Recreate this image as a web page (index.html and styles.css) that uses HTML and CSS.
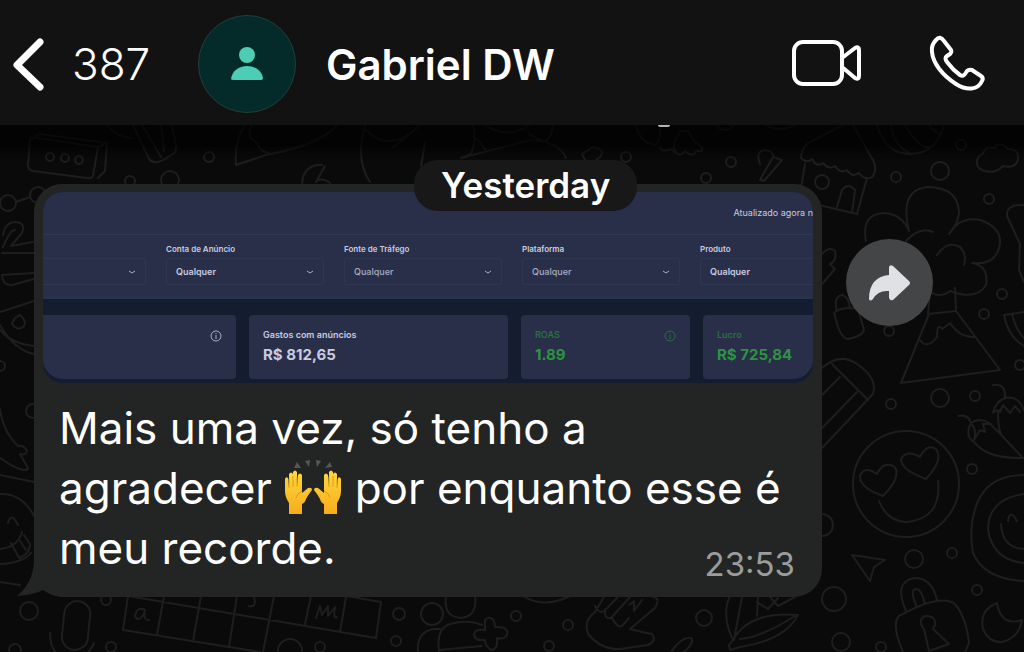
FILE: index.html
```
<!DOCTYPE html>
<html lang="pt-BR">
<head>
  <meta charset="UTF-8">
  <meta name="viewport" content="width=device-width, initial-scale=1.0">
  <title>Gabriel DW</title>
  <link rel="stylesheet" href="styles.css">
</head>
<body>
  <!-- Wallpaper -->
  <svg class="wallpaper" viewBox="0 0 1024 652" preserveAspectRatio="xMinYMin slice" aria-hidden="true">
    <!-- small dots -->
    <circle cx="209" cy="157" r="5"/><circle cx="170" cy="180" r="9"/><circle cx="130" cy="181" r="5"/>
    <circle cx="731" cy="162" r="5"/><circle cx="706" cy="178" r="5"/><circle cx="626" cy="157" r="5"/>
    <circle cx="961" cy="145" r="5"/><circle cx="896" cy="177" r="5"/><circle cx="940" cy="171" r="9"/>
    <circle cx="989" cy="199" r="5"/><circle cx="1002" cy="294" r="5"/><circle cx="984" cy="314" r="5"/>
    <circle cx="889" cy="331" r="5"/><circle cx="1020" cy="365" r="5"/><circle cx="940" cy="398" r="9"/>
    <circle cx="975" cy="396" r="5"/><circle cx="891" cy="404" r="5"/><circle cx="972" cy="469" r="5"/>
    <circle cx="822" cy="525" r="11"/><circle cx="914" cy="559" r="9"/><circle cx="952" cy="553" r="5"/>
    <circle cx="977" cy="590" r="5"/><circle cx="834" cy="599" r="12"/><circle cx="841" cy="642" r="9"/>
    <circle cx="881" cy="647" r="5"/><circle cx="29" cy="611" r="9"/><circle cx="106" cy="600" r="5"/>
    <circle cx="15" cy="650" r="6"/><circle cx="111" cy="647" r="5"/><circle cx="290" cy="651" r="12"/>
    <circle cx="320" cy="647" r="5"/><circle cx="399" cy="614" r="6"/><circle cx="396" cy="641" r="5"/>
    <circle cx="516" cy="616" r="5"/><circle cx="568" cy="625" r="5"/><circle cx="549" cy="646" r="5"/>
    <circle cx="704" cy="618" r="8"/><circle cx="0" cy="366" r="5"/><circle cx="33" cy="411" r="7"/>
    <!-- speech box -->
    <path d="M30 139 Q31 137 37 138 L98 147 L93 176 Q92 179 87 178 L33 171 Q28 170 28 165ZM35 136 L40 134 L107 143 L105 171 L98 178M98 147 L107 143"/>
    <circle cx="50" cy="157" r="4"/><circle cx="65" cy="158" r="4"/><circle cx="79" cy="160" r="4"/>
    <!-- dumbbell and ribbon -->
    <circle cx="8" cy="203" r="8"/><circle cx="38" cy="195" r="8"/>
    <path d="M16 202 L30 197M3 235 Q5 222 16 222 Q26 223 22 233 L11 246 L33 242M3 247 Q10 230 15 230M2 253 L34 253M2 275 L34 273M2 275 Q3 286 12 285 L34 279"/>
    <path d="M0 312 L34 301M0 325 Q14 350 34 354M12 324 Q14 317 20 315 Q27 321 24 326 Q18 332 12 324M0 330 Q12 344 34 346"/>
    <!-- pencil and pants -->
    <path d="M107 125 Q116 137 131 138M133 125 L149 159 Q154 165 163 160 L173 154 Q177 151 176 145 L172 125M161 125 L164 151M142 125 L161 157M245 125 Q234 142 236 165 L266 155 Q320 145 337 125M252 125 Q245 138 258 143 Q257 150 271 154M322 165 Q304 164 302 183 M325 166 L316 182 M318 180 Q324 178 330 183"/>
    <!-- fruit, guitar and cupcake -->
    <path d="M365 125 Q355 160 370 182M366 130 Q390 155 420 125M393 147 L406 138M425 143 Q423 155 421 166M473 125 Q477 140 471 154L461 158 L530 140 Q560 142 566 158M476 138 L485 149M485 125 Q508 140 529 125M529 134 L544 142 Q552 138 553 125M582 154 L588 166 L600 157 Q606 149 593 147ZM636 125 Q640 143 655 145 Q661 140 660 129M660 147 Q662 153 672 149 Q679 159 685 151 Q693 158 696 151 L702 151 Q704 147 695 142 L688 131 L681 131 Q670 145 676 151"/>
    <path d="M716 125 Q725 135 734 125M766 125 Q780 133 795 125M760 164 Q755 151 765 150 Q774 151 773 157 L782 160 L764 181 L760 180 L773 157"/>
    <!-- house -->
    <path d="M843 125 L808 143 Q801 150 801 158 Q807 164 812 159 Q817 168 823 163 Q829 170 835 166 Q840 174 847 170 Q852 178 859 173 Q865 181 872 177 Q877 172 874 162 L853 125M805 164 L801 188M867 178 L857 214 L819 205M837 207 L842 190 Q848 182 855 190 L852 213"/>
    <circle cx="822" cy="182" r="7"/>
    <!-- balloon -->
    <path d="M877 125 Q885 154 911 154 Q937 153 944 125M891 125 Q893 145 911 154M905 125 Q920 150 930 147M929 125 Q938 136 942 133"/>
    <!-- cloud -->
    <path d="M983 154 Q985 146 994 148 Q1000 140 1008 149 Q1019 148 1018 160 Q1015 169 1003 166 Q995 174 985 171 Q976 169 977 161 Q978 155 983 154"/>
    <!-- tree on a mountain -->
    <path d="M866 241 Q861 214 884 213 Q902 214 909 231 Q899 190 927 187 Q959 187 959 214 Q957 225 949 234 Q960 216 980 220 Q1001 227 1000 243 Q997 266 972 263 Q989 266 986 285 Q976 301 950 291 Q941 298 932 293M906 241 Q920 226 933 232M937 255 Q947 240 960 247 Q967 254 964 265M930 291 L928 314 L956 311 L955 288M929 314 L901 383 L1000 370 L956 311M920 340 Q927 350 937 337 Q937 322 942 329 L950 323 Q960 338 975 337"/>
    <path d="M1024 205 Q1006 204 1007 216 L1020 244 L1019 270 L1024 282M1024 312 L1004 315 Q1008 337 1024 346M1012 314 Q1016 330 1024 338"/>
    <!-- padlock and mitten behind the forward button -->
    <path d="M834 313 Q838 308 851 308 L858 309 L864 330 Q863 336 848 339 Q842 338 838 327ZM837 311 Q833 297 842 295 Q849 297 850 308M822 254 Q829 246 835 251 Q837 261 830 264 L835 269 L822 284"/>
    <!-- rolled paper -->
    <path d="M822 368 Q840 352 857 364 Q878 378 873 394 L822 448M832 364 L868 400M857 392 L822 428M822 395 L840 377"/>
    <!-- heart-eyed face -->
    <circle cx="906" cy="484" r="53"/>
    <path d="M883 496 Q859 487 860 476 Q864 465 877 474 Q884 460 895 467 Q901 478 883 496M926 479 Q901 470 901 459 Q907 449 920 457 Q927 443 936 449 Q944 460 926 479M879 501 Q887 521 906 522 Q942 519 938 481"/>
    <!-- chillies -->
    <path d="M959 416 Q968 414 971 423 Q964 436 975 443 Q988 459 1024 458M971 423 Q980 417 989 423 Q1000 433 1004 438 L1022 457M972 425 Q977 430 974 440 L980 430 L985 432 L983 424 L991 424M993 385 Q1006 383 1005 398 Q995 402 993 413 Q998 408 1000 412 L1003 405 L1010 413 L1015 406 L1020 412M1005 398 Q1018 395 1024 410M998 412 Q998 432 1003 437"/>
    <!-- laughing face -->
    <path d="M1024 475 Q990 475 978 501 Q968 525 973 553 Q984 579 1024 581M1024 494 Q988 499 988 530 Q993 560 1024 563M1001 524 Q1002 548 1024 549M1008 521 Q1010 508 1017 521"/>
    <!-- cursor, padlock and moon -->
    <path d="M852 555 L885 560 L874 567 L870 581Z"/>
    <path d="M906 611 Q893 581 915 578 Q932 578 937 600M917 607 Q909 590 916 589 Q921 588 925 604M903 652 Q891 625 899 616 Q940 593 955 604 Q966 617 969 643 L965 652M924 629 Q917 620 925 616 Q936 615 935 625 L933 629 L949 644 L929 651Z"/>
    <path d="M997 603 Q979 610 983 629 Q989 643 1002 642 Q1019 638 1022 620 Q1001 627 997 603"/>
    <!-- left edge doodles -->
    <path d="M0 409 Q3 432 18 446 Q24 445 27 451 Q25 456 20 454L28 468 Q25 475 0 458M0 475 L34 482M0 494 Q22 493 34 516M0 564 Q22 563 31 553M0 582 L20 585M8 523 Q11 511 18 525M0 549 Q18 547 22 532M11 543 L19 558 Q30 554 30 544L24 535M20 541 L26 550"/>
    <!-- microphone -->
    <rect x="63" y="601" width="26" height="49" rx="13" transform="rotate(6 76 626)"/>
    <path d="M50 633 Q50 652 64 660M94 643 Q90 652 82 658"/>
    <!-- letter grid -->
    <path d="M128 596 L123 630 L260 652M128 596 L376 638 L381 602 L346 596M164 596 L157 635M201 596 L193 641M237 596 L229 647M274 596 L263 652M311 596 L305 624M346 597 L340 632M145 610 Q137 606 135 616 Q138 623 144 614 L145 610 Q143 621 149 620M254 597 Q257 608 249 606M316 618 L320 606 L322 615 L328 606 L328 616 L335 607 Q333 620 337 617"/>
    <!-- people, hand and shuttlecock -->
    <circle cx="432" cy="614" r="11"/><path d="M446 596 Q443 617 461 618 Q478 616 475 596M418 652 Q416 632 434 629L440 629 M439 652 Q436 628 450 624 Q468 619 482 625M439 650 L482 646"/>
    <path d="M485 620 Q490 615 494 621 L495 627 Q509 626 507 635 Q504 640 497 638 Q498 650 491 650 Q485 646 485 640 Q474 641 474 634 Q475 629 485 630Z"/>
    <path d="M523 596 Q544 609 570 596M595 612 Q582 622 589 635 Q602 650 620 649 L648 645 Q657 641 652 634 Q641 632 630 629 L655 608 Q661 598 653 597M595 612 L604 597M595 606 Q599 614 604 611 L618 597M605 611 Q604 619 611 618 L630 597M612 618 Q617 628 622 626 L629 618M629 605 L634 601 L634 611 L642 600M671 652 Q682 636 691 638 Q695 642 684 652"/>
    <path d="M730 596 Q721 615 733 640 Q749 611 798 615 Q785 640 740 647 L730 650 L729 645 L733 640M742 597 L734 640M758 597 L757 616M740 639 Q762 637 795 616M770 597 L778 606 L795 597M757 602 L768 609 L778 598"/>
  </svg>

  <header class="chat-header">
    <a class="back" href="#" aria-label="Voltar">
      <svg width="32" height="54" viewBox="0 0 32 54"><path d="M28 5 L5 28 L28 50" fill="none" stroke="#fff" stroke-width="7" stroke-linecap="round" stroke-linejoin="round"/></svg>
      <span>387</span>
    </a>
    <div class="avatar">
      <svg width="32" height="34" viewBox="0 0 32 34"><circle cx="16" cy="8" r="8"/><path d="M0 32 C1 24 8 19 16 19 C24 19 31 24 32 31 Q32 33 29 33 L3 33 Q0 33 0 32Z"/></svg>
    </div>
    <h1>Gabriel DW</h1>
    <button class="icon-btn" aria-label="Chamada de vídeo">
      <svg width="70" height="50" viewBox="0 0 70 50" fill="none" stroke="#fff" stroke-width="4" stroke-linejoin="round"><rect x="2" y="3" width="48" height="42" rx="9"/><path d="M50 19 L63 9 Q67 7 67 11 L67 37 Q67 41 63 39 L50 28"/></svg>
    </button>
    <button class="icon-btn" aria-label="Chamada de voz">
      <svg width="58" height="58" viewBox="0 0 58 58" fill="none" stroke="#fff" stroke-width="4" stroke-linejoin="round"><path d="M8 5 Q12 0 16 6 L23 15 Q24 17 22 19 L19 21 Q16 23 19 27 Q25 35 32 40 Q35 42 37 39 L39 36 Q41 34 44 35 L53 41 Q56 43 54 46 C50 55 39 56 28 49 C14 40 5 28 4 17 Q3 10 8 5Z"/></svg>
    </button>
  </header>

  <main class="chat">
    <time class="day">Yesterday</time>

    <div class="message-row">
      <article class="bubble">
        <svg class="tail" width="44" height="38" viewBox="0 0 44 38"><path d="M17 0 Q17 23 0 37 Q17 36 26 31 Q34 36 44 38 L44 0Z"/></svg>

        <div class="dashboard">
          <p class="updated">Atualizado agora n</p>
          <div class="filters">
            <div class="filter">
              <div class="select-box"><svg class="chevron" viewBox="0 0 8 8"><path d="M1 3 L4 5 L7 3"/></svg></div>
            </div>
            <div class="filter">
              <label for="conta">Conta de Anúncio</label>
              <div class="select-box"><select id="conta" class="strong"><option>Qualquer</option></select><svg class="chevron" viewBox="0 0 8 8"><path d="M1 3 L4 5 L7 3"/></svg></div>
            </div>
            <div class="filter">
              <label for="fonte">Fonte de Tráfego</label>
              <div class="select-box"><select id="fonte"><option>Qualquer</option></select><svg class="chevron" viewBox="0 0 8 8"><path d="M1 3 L4 5 L7 3"/></svg></div>
            </div>
            <div class="filter">
              <label for="plataforma">Plataforma</label>
              <div class="select-box"><select id="plataforma"><option>Qualquer</option></select><svg class="chevron" viewBox="0 0 8 8"><path d="M1 3 L4 5 L7 3"/></svg></div>
            </div>
            <div class="filter">
              <label for="produto">Produto</label>
              <div class="select-box open"><select id="produto" class="strong"><option>Qualquer</option></select></div>
            </div>
          </div>
          <div class="cards">
            <div class="card">
              <svg class="info" viewBox="0 0 12 12"><circle cx="6" cy="6" r="5"/><path d="M6 5 L6 9M6 3 L6 4"/></svg>
            </div>
            <div class="card">
              <div><h2>Gastos com anúncios</h2><p>R$ 812,65</p></div>
            </div>
            <div class="card green">
              <div><h2>ROAS</h2><p>1.89</p></div>
              <svg class="info" viewBox="0 0 12 12"><circle cx="6" cy="6" r="5"/><path d="M6 5 L6 9M6 3 L6 4"/></svg>
            </div>
            <div class="card green">
              <div><h2>Lucro</h2><p>R$ 725,84</p></div>
            </div>
          </div>
        </div>

        <div class="content">
          <p class="text">Mais uma vez, só tenho a<br>agradecer <svg class="emoji" viewBox="0 0 58 56" role="img" aria-label="mãos para cima">
            <defs>
              <linearGradient id="skin" x1="0" y1="0" x2="0" y2="1"><stop offset="0" stop-color="#ffd83c"/><stop offset="1" stop-color="#f7ac1c"/></linearGradient>
              <g id="hand">
                <path fill="url(#skin)" d="M5 54 L5 43 Q1 37 1 31 L1 19 Q2 16 4 18 L5 27 L5 14 Q7 11 9 14 L9 26 L9 12 Q11 9 13 12 L13 26 L14 15 Q16 12 18 15 L18 33 L24 28 Q28 27 28 30 Q24 35 22 39 Q21 43 18 44 L18 54Z"/>
                <path fill="none" stroke="#e39a16" d="M5 19 L5 28M9 16 L9 27M13 17 L13 27M18 31 Q13 33 12 38"/>
              </g>
            </defs>
            <use href="#hand"/><use href="#hand" transform="matrix(-1 0 0 1 58 0)"/>
            <path fill="#555756" d="M10 8 L13 2 L17 8ZM21 1 L26 0 L25 7ZM32 0 L37 1 L33 7ZM41 8 L46 2 L48 7Z"/>
          </svg> por enquanto esse é<br>meu recorde.</p>
          <time class="sent">23:53</time>
        </div>
      </article>

      <button class="forward" aria-label="Encaminhar">
        <svg width="42" height="36" viewBox="0 0 42 36"><path d="M20 2 Q21 -1 24 1 L40 16 Q42 18 40 20 L24 35 Q21 36 20 33 L20 26 Q9 25 4 34 Q1 37 0 34 Q0 12 20 10Z"/></svg>
      </button>
    </div>
  </main>
</body>
</html>
```
FILE: styles.css
```
* {
  box-sizing: border-box;
}
body {
  margin: 0;
  min-height: 100vh;
  position: relative;
  overflow-x: hidden;
  background: #0a0a0a;
  color: #fff;
  font-family: Inter, "Liberation Sans", sans-serif;
}
h1, h2, p {
  margin: 0;
}
button {
  border: none;
  padding: 0;
  background: none;
  cursor: pointer;
}
svg {
  display: block;
  flex: none;
}
.wallpaper {
  position: absolute;
  top: 0;
  left: 0;
  width: 100%;
  height: 100%;
  fill: none;
  stroke: #1e1e1e;
  stroke-width: 2;
  stroke-linejoin: round;
  stroke-linecap: round;
}

/* Header */
.chat-header {
  position: relative;
  display: flex;
  align-items: center;
  height: 125px;
  padding: 3px 38px 0 12px;
  background: #121212;
}
.back {
  display: flex;
  align-items: center;
  gap: 28px;
  width: 186px;
  color: #fff;
  font-size: 44px;
  font-weight: 300;
  text-decoration: none;
}
.avatar {
  display: flex;
  align-items: center;
  justify-content: center;
  width: 98px;
  height: 98px;
  border: 1px solid #21403c;
  border-radius: 50%;
  background: #042a2a;
  fill: #4dcdb5;
}
.chat-header h1 {
  flex: 1;
  margin-left: 30px;
  font-size: 42px;
  font-weight: 600;
}
.icon-btn + .icon-btn {
  margin-left: 66px;
}

/* Conversation */
.chat {
  position: relative;
  padding: 59px 91px 55px 34px;
  background: linear-gradient(rgba(0, 0, 0, 0.7) 20px, rgba(0, 0, 0, 0) 36px);
}
/* end of the text scrolled under the header */
.chat::before {
  content: "";
  position: absolute;
  top: 0;
  left: 658px;
  width: 12px;
  height: 2px;
  border-radius: 0 0 6px 6px;
  background: #b4b4b4;
}
.day {
  position: absolute;
  z-index: 1;
  top: 35px;
  left: 414px;
  padding: 0 27px;
  border-radius: 24px;
  background: #181818;
  font-size: 35px;
  font-weight: 600;
  line-height: 51px;
}
.message-row {
  display: flex;
  align-items: flex-start;
  gap: 24px;
}
.bubble {
  position: relative;
  flex: 1;
  min-width: 0;
  padding: 8px 9px 19px;
  border-radius: 28px;
  background: #232524;
}
.tail {
  position: absolute;
  left: -17px;
  bottom: 0;
  fill: #232524;
}
.forward {
  display: flex;
  align-items: center;
  justify-content: center;
  width: 87px;
  height: 87px;
  margin-top: 55px;
  border-radius: 50%;
  background: #434546;
  fill: #dfe1e5;
}

/* Dashboard preview */
.dashboard {
  overflow: hidden;
  border-radius: 20px;
  background: #141c30;
  color: #c9cce0;
}
.updated {
  height: 43px;
  padding-top: 14px;
  border-bottom: 1px solid #2e3b51;
  background: #292f49;
  font-size: 9px;
  line-height: 14px;
  text-align: right;
  white-space: nowrap;
}
.filters {
  display: grid;
  grid-template-columns: 103fr 158fr 158fr 158fr 113fr;
  gap: 20px;
  height: 64px;
  border-bottom: 2px solid #26344c;
  background: #292f49;
}
.filter {
  display: flex;
  flex-direction: column;
  justify-content: flex-end;
  min-width: 0;
  padding-bottom: 12px;
}
.filter label {
  font-size: 8px;
  font-weight: 600;
  line-height: 12px;
  white-space: nowrap;
}
.select-box {
  display: flex;
  align-items: center;
  justify-content: flex-end;
  height: 27px;
  margin-top: 3px;
  padding: 0 9px;
  border: 1px solid #2e3750;
  border-radius: 3px;
}
.filter:first-child .select-box {
  border-left: none;
  border-radius: 0 3px 3px 0;
}
.select-box.open {
  border-right: none;
  border-radius: 3px 0 0 3px;
}
.select-box select {
  flex: 1;
  min-width: 0;
  padding: 0;
  border: none;
  appearance: none;
  background: none;
  color: #a9adc4;
  font: 500 9px Inter, "Liberation Sans", sans-serif;
}
.select-box .strong {
  color: #c9cce0;
  font-weight: 600;
}
.chevron {
  width: 8px;
  height: 8px;
  fill: none;
  stroke: #a9adc4;
}
.cards {
  display: grid;
  grid-template-columns: 193fr 259fr 169fr 110fr;
  gap: 13px;
  padding: 16px 0 4px;
}
.card {
  display: flex;
  justify-content: space-between;
  height: 64px;
  padding: 12px 14px;
  border-radius: 4px;
  background: #292f49;
  white-space: nowrap;
}
.card:first-child {
  justify-content: flex-end;
  border-radius: 0 4px 4px 20px;
}
.card:last-child {
  border-radius: 4px 0 20px 4px;
}
.card h2 {
  font-size: 9px;
  font-weight: 600;
  line-height: 15px;
}
.card p {
  font-size: 15px;
  font-weight: 700;
  line-height: 26px;
}
.info {
  width: 12px;
  height: 12px;
  margin-top: 3px;
  fill: none;
  stroke: #a9adc4;
}
.green {
  color: #2c9440;
}
.green h2 {
  color: #2a7040;
}
.green .info {
  stroke: #2a7040;
}

/* Message text */
.content {
  display: grid;
  padding: 15px 18px 0 16px;
}
.text,
.sent {
  grid-area: 1 / 1;
}
.text {
  font-size: 44px;
  line-height: 60px;
  white-space: nowrap;
}
.emoji {
  display: inline-block;
  width: 58px;
  height: 56px;
  vertical-align: -12px;
}
.sent {
  align-self: end;
  justify-self: end;
  color: #9a9d9b;
  font-size: 33px;
  line-height: 28px;
}
```
